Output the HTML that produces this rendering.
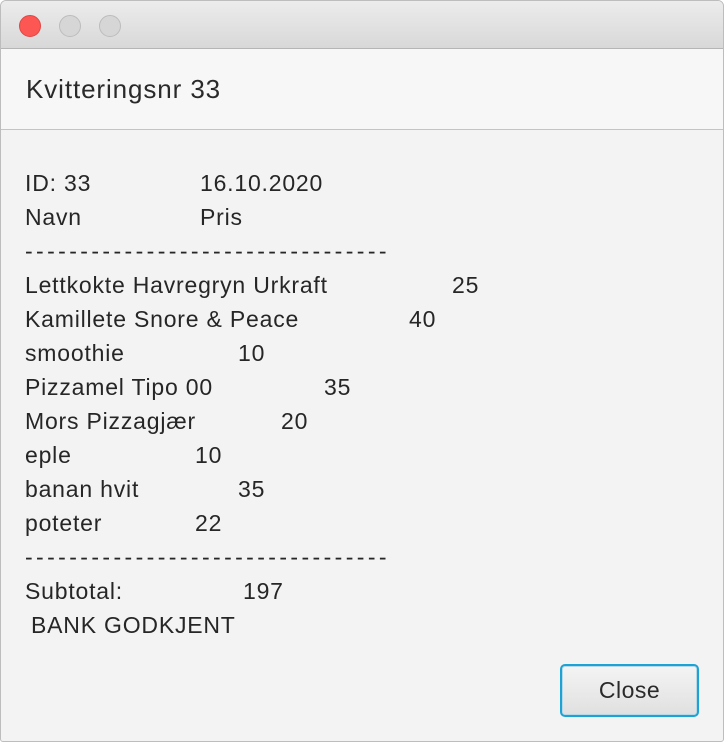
<!DOCTYPE html>
<html><head><style>
body{margin:0;width:724px;height:742px;background:#fff;position:relative;overflow:hidden;font-family:"Liberation Sans",Arial,sans-serif;color:#222}
.win{position:absolute;left:0;top:0;width:722px;height:740px;border:1px solid #bdbdbd;border-radius:6px 6px 3px 3px;background:#f3f3f3;overflow:hidden}
.tb{position:absolute;left:0;top:0;right:0;height:47px;background:linear-gradient(#ececec,#d8d8d8);border-bottom:1px solid #b5b5b5}
.dot{position:absolute;top:14px;width:22px;height:22px;border-radius:50%;box-sizing:border-box}
.hd{position:absolute;left:0;top:48px;right:0;height:80px;background:#f7f7f7;border-bottom:1px solid #c4c4c4}
.hd span{position:absolute;left:25px;top:25px;font-size:26px;letter-spacing:0.9px;color:#2a2a2a}
.t{position:absolute;font-size:23px;letter-spacing:0.8px;line-height:26px;white-space:nowrap;color:#262626}
.dash{letter-spacing:3.4px}
.btn{position:absolute;left:560px;top:664px;width:139px;height:53px;box-sizing:border-box;border:2px solid #1ba3d6;border-radius:5px;background:linear-gradient(#f4f4f4,#e0e0e0);box-shadow:inset 0 0 0 1px #b8d8e8;font-size:23px;letter-spacing:0.5px;text-align:center;line-height:49px;color:#2a2a2a}
</style></head><body>
<div class="win">
<div class="tb">
<div class="dot" style="left:18px;background:#fc5753;border:1px solid #df4744"></div>
<div class="dot" style="left:58px;background:#d6d6d6;border:1px solid #bcbcbc"></div>
<div class="dot" style="left:98px;background:#d6d6d6;border:1px solid #bcbcbc"></div>
</div>
<div class="hd"><span>Kvitteringsnr 33</span></div>
</div>
<div class="t" style="left:25px;top:170px">ID: 33</div><div class="t" style="left:200px;top:170px">16.10.2020</div>
<div class="t" style="left:25px;top:204px">Navn</div><div class="t" style="left:200px;top:204px">Pris</div>
<div class="t dash" style="left:25px;top:238px">---------------------------------</div>
<div class="t" style="left:25px;top:272px">Lettkokte Havregryn Urkraft</div><div class="t" style="left:452px;top:272px">25</div>
<div class="t" style="left:25px;top:306px">Kamillete Snore &amp; Peace</div><div class="t" style="left:409px;top:306px">40</div>
<div class="t" style="left:25px;top:340px">smoothie</div><div class="t" style="left:238px;top:340px">10</div>
<div class="t" style="left:25px;top:374px">Pizzamel Tipo 00</div><div class="t" style="left:324px;top:374px">35</div>
<div class="t" style="left:25px;top:408px">Mors Pizzagjær</div><div class="t" style="left:281px;top:408px">20</div>
<div class="t" style="left:25px;top:442px">eple</div><div class="t" style="left:195px;top:442px">10</div>
<div class="t" style="left:25px;top:476px">banan hvit</div><div class="t" style="left:238px;top:476px">35</div>
<div class="t" style="left:25px;top:510px">poteter</div><div class="t" style="left:195px;top:510px">22</div>
<div class="t dash" style="left:25px;top:544px">---------------------------------</div>
<div class="t" style="left:25px;top:578px">Subtotal:</div><div class="t" style="left:243px;top:578px">197</div>
<div class="t" style="left:31px;top:612px">BANK GODKJENT</div>
<div class="btn">Close</div>
</body></html>
